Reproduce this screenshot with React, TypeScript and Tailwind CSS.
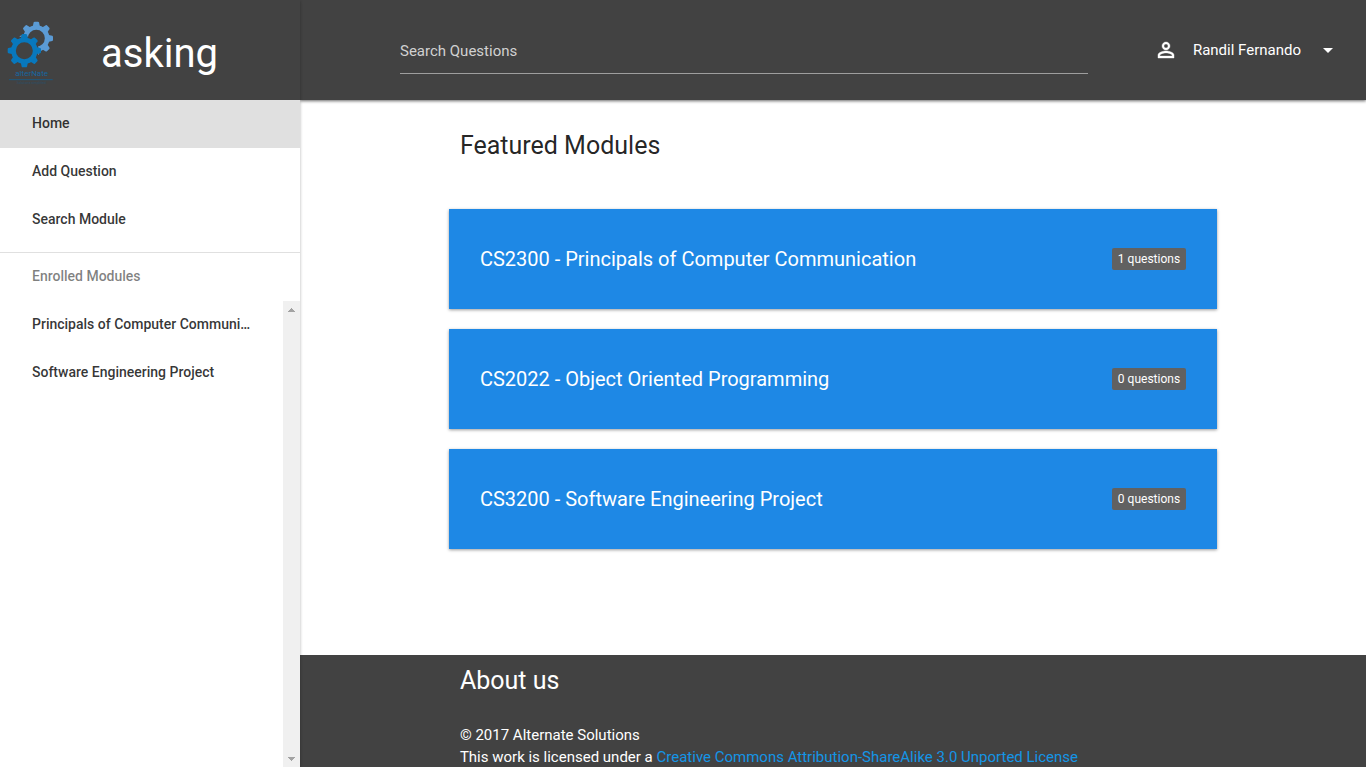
import React from "react";

type Module = { code: string; name: string; questions: number };

const modules: Module[] = [
  { code: "CS2300", name: "Principals of Computer Communication", questions: 1 },
  { code: "CS2022", name: "Object Oriented Programming", questions: 0 },
  { code: "CS3200", name: "Software Engineering Project", questions: 0 },
];

const enrolled = ["Principals of Computer Communication", "Software Engineering Project"];

const toothAngles = [0, 45, 90, 135, 180, 225, 270, 315];

function Gear({ cx, cy, color }: { cx: number; cy: number; color: string }) {
  return (
    <g transform={`translate(${cx} ${cy})`}>
      {toothAngles.map((a) => (
        <path key={a} d="M-11 -34 L-8 -48 Q-7 -50 -5 -50 H5 Q7 -50 8 -48 L11 -34 Z" fill={color} transform={`rotate(${a})`} />
      ))}
      <circle r="32.5" fill="none" stroke={color} strokeWidth="14" />
    </g>
  );
}

function Logo() {
  return (
    <svg viewBox="0 0 240 240" className="size-20 shrink-0" role="img" aria-label="alterNate">
      <Gear cx={109} cy={85} color="#5b9bd5" />
      <circle cx="73" cy="122" r="43" fill="#424242" />
      <Gear cx={73} cy={122} color="#0878bd" />
      <text x="95" y="199" textAnchor="middle" fontFamily="Roboto, sans-serif" fontSize="24" fill="#1766a0">
        alterNate
      </text>
      <path d="M27 209H158" stroke="#1d587e" strokeWidth="3" />
      <text x="94" y="223" textAnchor="middle" fontFamily="Roboto, sans-serif" fontSize="10" fill="#2b506a">
        Solutions simplified
      </text>
    </svg>
  );
}

function NavLink({ label, active = false }: { label: string; active?: boolean }) {
  return (
    <li>
      <a
        href="#"
        className={`block h-12 truncate px-8 text-sm leading-[46px] font-medium text-black/80 ${active ? "bg-[#e0e0e0]" : ""}`}
      >
        {label}
      </a>
    </li>
  );
}

function Sidebar() {
  return (
    <aside className="z-10 flex w-[300px] shrink-0 flex-col bg-white shadow-[0_1px_3px_rgba(0,0,0,0.3)]">
      <div className="flex h-[100px] shrink-0 items-center gap-[21px] bg-[#424242] text-white">
        <Logo />
        <span className="pt-2 text-[40px] leading-[48px]">asking</span>
      </div>
      <nav className="flex min-h-0 flex-1 flex-col">
        <ul>
          <NavLink label="Home" active />
          <NavLink label="Add Question" />
          <NavLink label="Search Module" />
        </ul>
        <hr className="mt-2 border-[#e0e0e0]" />
        <h2 className="h-12 px-8 text-sm leading-[46px] font-medium text-black/50">Enrolled Modules</h2>
        <div className="flex min-h-0 flex-1">
          <ul className="min-w-0 flex-1">
            {enrolled.map((m) => (
              <NavLink key={m} label={m} />
            ))}
          </ul>
          <div className="flex w-[17px] flex-col items-center justify-between bg-[#f0f0f0] pt-[7px] pb-[6px]" aria-hidden="true">
            <svg viewBox="0 0 7 4" className="h-1 w-[7px]" fill="#a3a3a3">
              <path d="M0 4V3H1V2H2V1H3V0H4V1H5V2H6V3H7V4Z" />
            </svg>
            <svg viewBox="0 0 7 4" className="h-1 w-[7px]" fill="#a3a3a3">
              <path d="M0 0V1H1V2H2V3H3V4H4V3H5V2H6V1H7V0Z" />
            </svg>
          </div>
        </div>
      </nav>
    </aside>
  );
}

function Header() {
  return (
    <header className="z-[5] flex h-[100px] shrink-0 items-center bg-[#424242] pr-[33px] pl-[100px] text-white shadow-[0_1px_3px_rgba(0,0,0,0.6)]">
      <input
        type="search"
        aria-label="Search Questions"
        placeholder="Search Questions"
        className="mr-[66px] h-12 min-w-0 flex-1 border-b border-[#9e9e9e] bg-transparent pt-[3px] text-[15px] outline-none placeholder:text-[#d1d1d1]"
      />
      <button type="button" className="flex items-center text-[15px] leading-6 font-normal">
        <svg viewBox="0 0 24 24" className="mr-[15px] size-6" fill="currentColor" aria-hidden="true">
          <path d="M12 5.9a2.1 2.1 0 1 1 0 4.2 2.1 2.1 0 0 1 0-4.2m0 9c2.97 0 6.1 1.46 6.1 2.1v1.1H5.9V17c0-.64 3.13-2.1 6.1-2.1M12 4C9.79 4 8 5.79 8 8s1.79 4 4 4 4-1.79 4-4-1.79-4-4-4zm0 9c-2.67 0-8 1.34-8 4v3h16v-3c0-2.66-5.33-4-8-4z" stroke="currentColor" strokeWidth="0.4" />
        </svg>
        Randil Fernando
        <svg viewBox="0 0 10 5" className="mt-px ml-[22px] h-[5px] w-[10px]" fill="currentColor" aria-hidden="true">
          <path d="M0 0H10L5 5Z" />
        </svg>
      </button>
    </header>
  );
}

function ModuleCard({ module }: { module: Module }) {
  return (
    <a
      href="#"
      className="flex h-[100px] items-center justify-between bg-[#1e88e5] px-[31px] text-white shadow-[0_1px_3px_rgba(0,0,0,0.4)]"
    >
      <span className="text-xl">
        {module.code} - {module.name}
      </span>
      <span className="rounded-xs bg-[#616161] px-[6px] text-xs leading-[22px]">{module.questions} questions</span>
    </a>
  );
}

export default function App() {
  return (
    <div className="flex h-screen overflow-hidden bg-white font-['Roboto',sans-serif] text-black/87">
      <Sidebar />
      <div className="flex min-w-0 flex-1 flex-col">
        <Header />
        <main className="min-h-0 flex-1">
          <div className="mx-auto w-[70%] pt-7">
            <h1 className="text-[25px] leading-9">Featured Modules</h1>
            <div className="-mx-[11px] mt-[45px] flex flex-col gap-5">
              {modules.map((m) => (
                <ModuleCard key={m.code} module={m} />
              ))}
            </div>
          </div>
        </main>
        <footer className="h-28 shrink-0 bg-[#424242] text-white">
          <div className="mx-auto w-[70%] pt-2">
            <h2 className="text-[25px] leading-9">About us</h2>
            <p className="mt-[25px] text-[15px] leading-[22px]">
              © 2017 Alternate Solutions
              <br />
              This work is licensed under a{" "}
              <a href="#" className="text-[#1495e6]">
                Creative Commons Attribution-ShareAlike 3.0 Unported License
              </a>
            </p>
          </div>
        </footer>
      </div>
    </div>
  );
}
